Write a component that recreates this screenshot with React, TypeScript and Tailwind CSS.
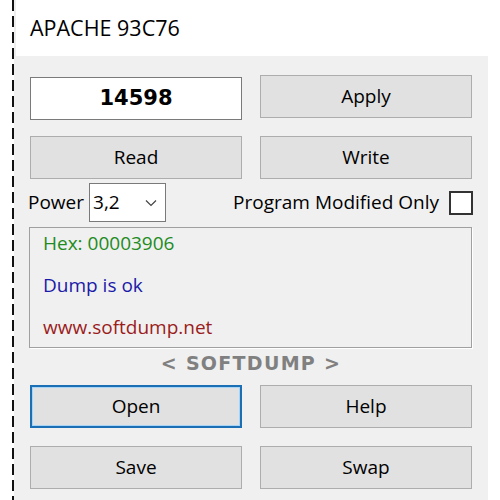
import { ReactNode } from "react";

const Btn = ({ children, focused = false }: { children: ReactNode; focused?: boolean }) => (
    <button
        className={
            focused
                ? "flex h-[43px] items-center justify-center border-2 border-[#1a6fb5] bg-[#e1e1e1] text-[19px] text-black shadow-[inset_0_0_0_1px_#a8d4f5]"
                : "flex h-[43px] items-center justify-center border border-[#adadad] bg-[#e1e1e1] text-[19px] text-black"
        }
    >
        {children}
    </button>
);

const App = () => {
    return (
        <div className="flex h-[500px] w-[500px] bg-white font-['Open_Sans',sans-serif] text-black">
            {/* dashed focus line on the far left */}
            <div className="ml-[12px] h-full w-[2px] bg-[repeating-linear-gradient(to_bottom,#111_0_11px,transparent_11px_16px)]" />

            <div className="flex w-[474px] flex-col">
                {/* caption */}
                <div className="flex h-[56px] items-center border-l-2 border-[#eeeeee] pl-[14px] text-[21.5px] leading-none">
                    APACHE 93C76
                </div>

                <div className="flex flex-1 flex-col bg-[#f0f0f0] px-[16px] pt-[19px]">
                    {/* value + apply */}
                    <div className="grid grid-cols-2 items-start gap-x-[18px]">
                        <div className="mt-[2px] flex h-[43px] items-center justify-center border border-[#7a7a7a] bg-white font-['DejaVu_Sans',sans-serif] text-[21px] font-bold">
                            14598
                        </div>
                        <div className="flex flex-col">
                            <Btn>Apply</Btn>
                        </div>
                    </div>

                    <div className="mt-[16px] grid grid-cols-2 gap-x-[18px]">
                        <Btn>Read</Btn>
                        <Btn>Write</Btn>
                    </div>

                    {/* power + option */}
                    <div className="mt-[4px] flex h-[39px] items-center">
                        <span className="-ml-[2px] text-[19px]">Power</span>
                        <div className="ml-[5px] flex h-[39px] w-[77px] items-center justify-between border border-[#7a7a7a] bg-white pl-[3px] pr-[8px] text-[19px]">
                            <span>3,2</span>
                            <svg width="12" height="8" viewBox="0 0 12 8" fill="none">
                                <polyline points="1,1.5 6,6.5 11,1.5" stroke="#444" strokeWidth="1.2" />
                            </svg>
                        </div>
                        <span className="ml-auto mr-[10px] text-[19px]">Program Modified Only</span>
                        <div className="mr-[-1px] h-[24px] w-[24px] border-2 border-[#333] bg-white" />
                    </div>

                    {/* log box */}
                    <div className="-ml-[1px] mt-[5px] flex h-[121px] flex-col gap-[18px] border border-[#a0a0a0] pl-[13px] pt-[3px] text-[19px] leading-[24px] shadow-[1px_1px_0_#ffffff]">
                        <span className="text-[#228b22]">Hex: 00003906</span>
                        <span className="text-[#1a1aa8]">Dump is ok</span>
                        <span className="text-[#9b1c1c]">www.softdump.net</span>
                    </div>

                    <div className="mt-[3px] text-center font-['DejaVu_Sans',sans-serif] text-[19px] font-bold leading-[24px] tracking-[1.3px] text-[#808080]">
                        &lt; SOFTDUMP &gt;
                    </div>

                    <div className="mt-[10px] grid grid-cols-2 gap-x-[18px]">
                        <Btn focused>Open</Btn>
                        <Btn>Help</Btn>
                    </div>

                    <div className="mt-[18px] grid grid-cols-2 gap-x-[18px]">
                        <Btn>Save</Btn>
                        <Btn>Swap</Btn>
                    </div>
                </div>
            </div>
        </div>
    );
};

export default App;
